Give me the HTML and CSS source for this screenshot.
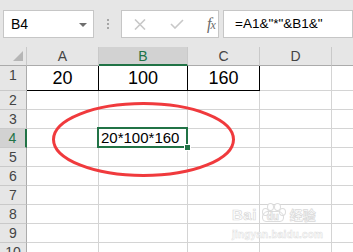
FILE: index.html
```html
<!DOCTYPE html>
<html lang="zh">

<head>
    <meta charset="UTF-8">
    <meta name="viewport" content="width=device-width, initial-scale=1.0">
    <title>Excel</title>
    <link rel="stylesheet" href="styles.css">
</head>

<body>
    <div class="app">
        <div class="toolbar">
            <div class="namebox">
                <span>B4</span>
                <span class="caret"></span>
            </div>
            <div class="grip"><i></i><i></i><i></i></div>
            <div class="fxbox">
                <svg class="icon" width="12" height="11" viewBox="0 0 12 11">
                    <path d="M1 0.5 L11 10.5 M11 0.5 L1 10.5" stroke="#c8c8c8" stroke-width="1.6" fill="none" />
                </svg>
                <svg class="icon" width="14" height="10" viewBox="0 0 14 10">
                    <path d="M1 5 L5 9 L13 1" stroke="#c8c8c8" stroke-width="1.6" fill="none" />
                </svg>
                <span class="fx">f<sub>x</sub></span>
            </div>
            <div class="formula">=A1&amp;"*"&amp;B1&amp;"</div>
        </div>

        <div class="sheet">
            <div class="hd corner"><span class="tri"></span></div>
            <div class="hd">A</div>
            <div class="hd active-col">B</div>
            <div class="hd">C</div>
            <div class="hd">D</div>
            <div class="hd"></div>

            <div class="rh">1</div>
            <div class="c big boxed">20</div>
            <div class="c big boxed">100</div>
            <div class="c big boxed">160</div>
            <div class="c"></div>
            <div class="c"></div>

            <div class="rh">2</div>
            <div class="c"></div><div class="c"></div><div class="c"></div><div class="c"></div><div class="c"></div>

            <div class="rh">3</div>
            <div class="c"></div><div class="c"></div><div class="c"></div><div class="c"></div><div class="c"></div>

            <div class="rh active-row">4</div>
            <div class="c"></div>
            <div class="c sel">20*100*160<span class="handle"></span></div>
            <div class="c"></div><div class="c"></div><div class="c"></div>

            <div class="rh">5</div>
            <div class="c"></div><div class="c"></div><div class="c"></div><div class="c"></div><div class="c"></div>

            <div class="rh">6</div>
            <div class="c"></div><div class="c"></div><div class="c"></div><div class="c"></div><div class="c"></div>

            <div class="rh">7</div>
            <div class="c"></div><div class="c"></div><div class="c"></div><div class="c"></div><div class="c"></div>

            <div class="rh">8</div>
            <div class="c"></div><div class="c"></div><div class="c"></div><div class="c"></div><div class="c"></div>

            <div class="rh">9</div>
            <div class="c"></div><div class="c"></div><div class="c"></div><div class="c"></div><div class="c"></div>

            <div class="rh">10</div>
            <div class="c"></div><div class="c"></div><div class="c"></div><div class="c"></div><div class="c"></div>
        </div>

        <!-- red annotation ring -->
        <svg class="ring" width="353" height="252" viewBox="0 0 353 252">
            <ellipse cx="143.5" cy="139.5" rx="90" ry="36" fill="none" stroke="#f03a3d" stroke-width="3" />
        </svg>

        <div class="watermark">
            <div class="wm-top">
                <span class="wm-bai">Bai</span>
                <span class="wm-paw">
                    <i class="t1"></i><i class="t2"></i><i class="t3"></i><i class="t4"></i>
                    <b>du</b>
                </span>
                <span class="wm-jy">经验</span>
            </div>
            <div class="wm-url">jingyan.baidu.com</div>
        </div>
    </div>
</body>

</html>
```

FILE: styles.css
```css
body {
    margin: 0;
    padding: 0;
    font-family: 'Liberation Sans', Arial, sans-serif;
    background-color: #ffffff;
}

.app {
    position: relative;
    width: 353px;
    height: 252px;
    overflow: hidden;
}

/* formula bar */
.toolbar {
    height: 47px;
    background-color: #e6e6e6;
    display: flex;
    align-items: flex-start;
    padding-top: 10px;
    box-sizing: border-box;
}

.namebox {
    margin-left: 3px;
    width: 102px;
    height: 28px;
    box-sizing: border-box;
    background-color: #ffffff;
    border: 1px solid #c6c6c6;
    display: flex;
    align-items: center;
    justify-content: space-between;
    padding: 0 6px 0 7px;
    font-size: 14px;
    color: #000000;
}

.caret {
    width: 0;
    height: 0;
    border-left: 4px solid transparent;
    border-right: 4px solid transparent;
    border-top: 4px solid #6e6e6e;
    margin-top: 1px;
}

.grip {
    width: 31px;
    height: 28px;
    display: flex;
    flex-direction: column;
    align-items: center;
    justify-content: center;
    gap: 2px;
}

.grip i {
    display: block;
    width: 2px;
    height: 2px;
    background-color: #a6a6a6;
}

.fxbox {
    width: 110px;
    height: 28px;
    box-sizing: border-box;
    background-color: #ffffff;
    border: 1px solid #c6c6c6;
    display: flex;
    align-items: center;
    padding-left: 12px;
}

.fxbox .icon {
    display: block;
}

.fxbox .icon + .icon {
    margin-left: 24px;
}

.fx {
    margin-left: 23px;
    font-family: 'Liberation Serif', serif;
    font-style: italic;
    font-size: 16px;
    color: #6a6a6a;
    line-height: 1;
}

.fx sub {
    font-size: 12px;
    vertical-align: baseline;
    margin-left: -1px;
}

.formula {
    margin-left: 4px;
    width: 130px;
    flex-shrink: 0;
    height: 28px;
    box-sizing: border-box;
    background-color: #ffffff;
    border: 1px solid #c6c6c6;
    padding-left: 11px;
    font-size: 13.5px;
    line-height: 26px;
    color: #000000;
    white-space: nowrap;
}

/* grid */
.sheet {
    display: grid;
    grid-template-columns: 27px 72px 89px 72px 72px 40px;
    grid-template-rows: 19px 25px repeat(9, 19px);
}

.sheet > div {
    box-sizing: border-box;
    border-right: 1px solid #d4d4d4;
    border-bottom: 1px solid #d4d4d4;
}

.hd {
    background-color: #e6e6e6;
    border-right-color: #c9c9c9 !important;
    border-bottom-color: #ababab !important;
    font-size: 14px;
    color: #444444;
    text-align: center;
    line-height: 18px;
}

.corner {
    position: relative;
}

.tri {
    position: absolute;
    right: 3px;
    bottom: 4px;
    width: 0;
    height: 0;
    border-left: 10px solid transparent;
    border-bottom: 10px solid #b6b6b6;
}

.active-col {
    background-color: #d2d2d2;
    border-bottom: 2px solid #217346 !important;
    color: #217346;
}

.rh {
    background-color: #e6e6e6;
    border-right-color: #ababab !important;
    border-bottom-color: #c9c9c9 !important;
    font-size: 14px;
    color: #444444;
    text-align: center;
    line-height: 19px;
}

.active-row {
    background-color: #d2d2d2;
    border-right: 2px solid #217346 !important;
    color: #217346;
}

.c {
    font-size: 15px;
    line-height: 18px;
    color: #000000;
    white-space: nowrap;
}

.big {
    font-size: 18px;
    line-height: 24px;
    text-align: center;
}

.boxed {
    border-right-color: #000000 !important;
    border-bottom-color: #000000 !important;
}

.sel {
    position: relative;
    padding-left: 2px;
    z-index: 2;
}

.sel::after {
    content: "";
    position: absolute;
    top: -2px;
    left: -2px;
    right: -1px;
    bottom: -1px;
    border: 2px solid #217346;
}

.handle {
    position: absolute;
    right: -4px;
    bottom: -4px;
    width: 5px;
    height: 5px;
    background-color: #217346;
    border: 1px solid #ffffff;
    z-index: 3;
}

/* annotation */
.ring {
    position: absolute;
    left: 0;
    top: 0;
    pointer-events: none;
    z-index: 5;
}

/* watermark */
.watermark {
    position: absolute;
    left: 232px;
    top: 200px;
    z-index: 4;
    color: #ffffff;
    -webkit-text-stroke: 0.7px #d9d9d9;
    font-family: 'Liberation Sans', sans-serif;
    font-weight: bold;
}

.wm-top {
    display: flex;
    align-items: flex-end;
    height: 22px;
}

.wm-bai {
    font-size: 15px;
    line-height: 15px;
    letter-spacing: 0.5px;
}

.wm-paw {
    position: relative;
    width: 28px;
    height: 20px;
    margin-left: 2px;
}

.wm-paw i {
    position: absolute;
    width: 5px;
    height: 6px;
    border-radius: 50%;
    background-color: #ffffff;
    border: 1px solid #dcdcdc;
}

.wm-paw .t1 { left: 3px; top: 6px; }
.wm-paw .t2 { left: 8px; top: 1px; }
.wm-paw .t3 { left: 15px; top: 1px; }
.wm-paw .t4 { left: 20px; top: 6px; }

.wm-paw b {
    position: absolute;
    left: 3px;
    bottom: 0;
    width: 22px;
    height: 11px;
    border-radius: 6px 6px 4px 4px;
    border: 1px solid #dcdcdc;
    font-size: 10px;
    line-height: 10px;
    text-align: center;
    box-sizing: border-box;
}

.wm-jy {
    margin-left: 3px;
    font-family: 'Noto Sans CJK SC', sans-serif;
    font-size: 13px;
    line-height: 15px;
}

.wm-url {
    margin-top: 7px;
    font-size: 10px;
    letter-spacing: 0.2px;
    -webkit-text-stroke: 0.5px #dedede;
}
```
